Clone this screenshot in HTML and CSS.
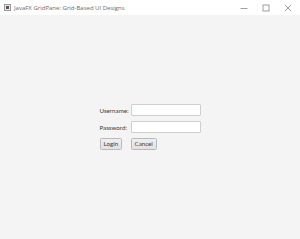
FILE: index.html
```html
<!DOCTYPE html>
<html>
<head>
<meta charset="utf-8">
<link rel="stylesheet" href="styles.css">
</head>
<body>
<div class="window">
  <div class="titlebar">
    <div class="title-left">
      <svg class="app-icon" width="7" height="7" viewBox="0 0 7 7"><rect x="0.5" y="0.5" width="6" height="6" fill="#e8e8e8" stroke="#9a9a9a" stroke-width="1"/><rect x="2" y="2" width="3" height="3" fill="#555"/></svg>
      <span class="title">JavaFX GridPane: Grid-Based UI Designs</span>
    </div>
    <div class="controls">
      <svg class="ctl" width="8" height="8" viewBox="0 0 8 8"><line x1="0.5" y1="4.5" x2="7.5" y2="4.5" stroke="#777" stroke-width="0.7"/></svg>
      <svg class="ctl" width="8" height="8" viewBox="0 0 8 8"><rect x="1" y="1" width="6" height="6" fill="none" stroke="#777" stroke-width="0.7"/></svg>
      <svg class="ctl" width="8" height="8" viewBox="0 0 8 8"><path d="M1 1L7 7M7 1L1 7" stroke="#777" stroke-width="0.7"/></svg>
    </div>
  </div>
  <div class="content">
    <div class="grid">
      <label class="lbl">Username:</label>
      <div class="field"></div>
      <label class="lbl">Password:</label>
      <div class="field"></div>
      <div class="cell"><button class="btn">Login</button></div>
      <div class="cell"><button class="btn">Cancel</button></div>
    </div>
  </div>
</div>
</body>
</html>
```
FILE: styles.css
```css
html, body {
  margin: 0;
  padding: 0;
}
body {
  width: 300px;
  height: 239px;
  overflow: hidden;
  font-family: "Open Sans", "Noto Sans", sans-serif;
}
.window {
  width: 300px;
  height: 239px;
  display: flex;
  flex-direction: column;
  background: #f4f4f4;
}
.titlebar {
  height: 15px;
  background: #ffffff;
  display: flex;
  align-items: center;
  justify-content: space-between;
  flex-shrink: 0;
}
.title-left {
  display: flex;
  align-items: center;
  padding-left: 4px;
  gap: 3px;
}
.app-icon {
  display: block;
}
.title {
  font-size: 6px;
  color: #6a6a6a;
  line-height: 1;
}
.controls {
  display: flex;
  align-items: center;
  gap: 14px;
  padding-right: 8px;
}
.ctl {
  display: block;
}
.content {
  flex: 1;
  display: flex;
  align-items: center;
  justify-content: center;
}
.grid {
  display: grid;
  grid-template-columns: 26px 70px;
  grid-auto-rows: 12px;
  column-gap: 5px;
  row-gap: 5px;
  align-items: center;
}
.lbl {
  font-family: Lato, "Open Sans", sans-serif;
  font-size: 6.2px;
  color: #3a3a3a;
  white-space: nowrap;
}
.field {
  height: 12px;
  box-sizing: border-box;
  background: #fff;
  border: 1px solid #cfcfcf;
  border-radius: 1px;
}
.cell {
  display: flex;
  align-items: center;
}
.btn {
  height: 12px;
  box-sizing: border-box;
  padding: 0 3px;
  font-family: Lato, "Open Sans", sans-serif;
  font-size: 6.2px;
  color: #3a3a3a;
  background: linear-gradient(#efefef, #e2e2e2);
  border: 1px solid #b9b9b9;
  border-radius: 1.5px;
  line-height: 1;
}
```
